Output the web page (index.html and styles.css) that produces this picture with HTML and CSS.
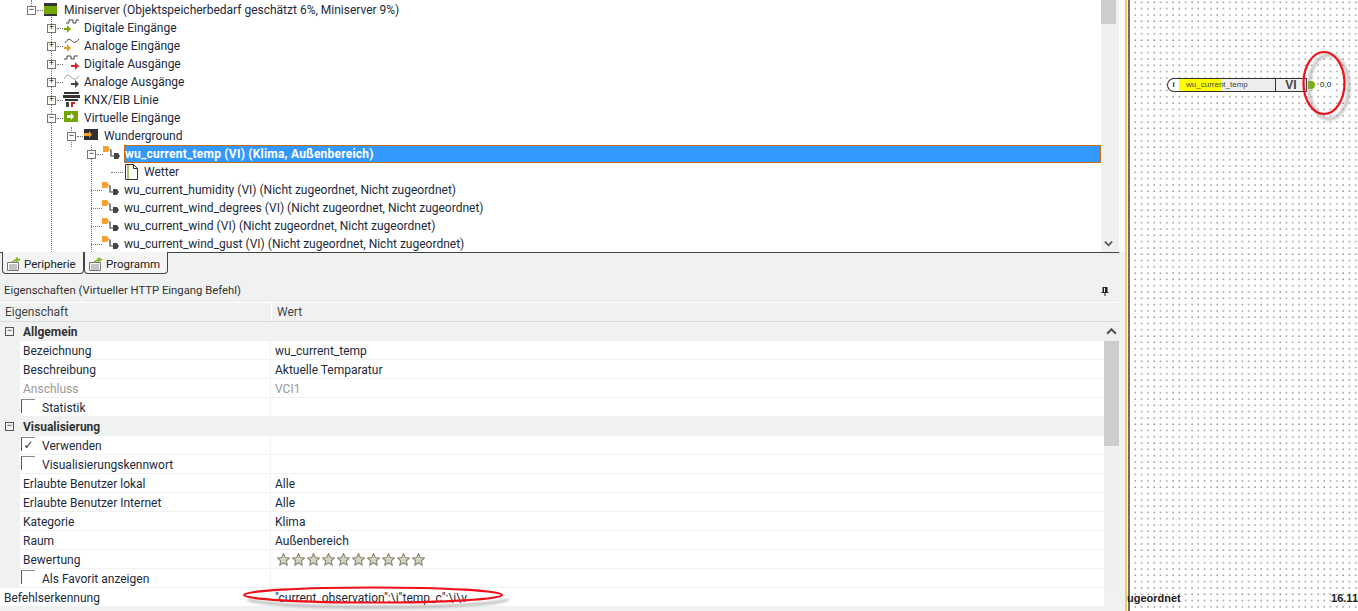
FILE: index.html
```html
<!DOCTYPE html>
<html lang="de">
<head>
<meta charset="utf-8">
<title>Loxone Config</title>
<link rel="stylesheet" href="styles.css">
</head>
<body>
<svg class="defs" width="0" height="0">
  <defs>
    <symbol id="vi" viewBox="0 0 18 18"><path d="M0 1h5l2 3-2 3H0z" fill="#f5a030"/><path d="M7 5h1v6h3" fill="none" stroke="#444" stroke-width="1.2"/><path d="M11 8h4l2 3-2 3h-4z" fill="#444"/></symbol>
    <symbol id="stars" viewBox="0 0 11 11"><path d="M5.5.5l1.5 3.3 3.5.4-2.6 2.4.7 3.6-3.1-1.8-3.1 1.8.7-3.6L.5 4.2 4 3.8z" fill="#d8d4c4" stroke="#8d8a78"/></symbol>
    <symbol id="tabicon" viewBox="0 0 16 16"><path d="M1.500 6.500h11v8h-11z" fill="#fff" stroke="#777"/><path d="M3 9h8M3 11h8M3 13h8" stroke="#888"/><path d="M5 6l5-3.500V1l5 2.500-5 3V5L7 6.500z" fill="#8cb83c"/></symbol>
  </defs>
</svg>
<div class="app">
  <div class="left">
    <section class="tree">
      <div class="treelist">
        <i class="guide g1"></i><i class="guide g2"></i><i class="guide g3"></i><i class="guide g4"></i>
        <div class="node l1"><span class="box">−</span><span class="dots"></span><svg class="ic" viewBox="0 0 18 18"><path d="M1 2h13v3H1z" fill="#333"/><path d="M1 5h13v8H1z" fill="#72a600"/><path d="M1 13h13v2H1z" fill="#333"/></svg><span class="lbl">Miniserver (Objektspeicherbedarf geschätzt 6%, Miniserver 9%)</span></div>
        <div class="node l2"><span class="box">+</span><span class="dots"></span><svg class="ic" viewBox="0 0 18 18"><path d="M3 4h3V1h4v3h3V1h3" fill="none" stroke="#444"/><path d="M1 9h3V6l4 4-4 4v-3H1z" fill="#7ab000"/></svg><span class="lbl">Digitale Eingänge</span></div>
        <div class="node l2"><span class="box">+</span><span class="dots"></span><svg class="ic" viewBox="0 0 18 18"><path d="M2 6c3-5 5-4 7-2s4 2 7-2" fill="none" stroke="#444"/><path d="M1 10h3V7l4 4-4 4v-3H1z" fill="#e0a020"/></svg><span class="lbl">Analoge Eingänge</span></div>
        <div class="node l2"><span class="box">+</span><span class="dots"></span><svg class="ic" viewBox="0 0 18 18"><path d="M1 4h3V1h4v3h3V1h4" fill="none" stroke="#444"/><path d="M8 10h4V7l4 4-4 4v-3H8z" fill="#e02020"/></svg><span class="lbl">Digitale Ausgänge</span></div>
        <div class="node l2"><span class="box">+</span><span class="dots"></span><svg class="ic" viewBox="0 0 18 18"><path d="M1 6c3-5 5-4 7-2s4 4 8-1" fill="none" stroke="#999"/><path d="M8 10h4V7l4 4-4 4v-3H8z" fill="#444"/></svg><span class="lbl">Analoge Ausgänge</span></div>
        <div class="node l2"><span class="box">+</span><span class="dots"></span><svg class="ic" viewBox="0 0 18 18"><path d="M1 1h15v2H1zM0 4h17v3H0zM2 8h13v2H2z" fill="#333"/><path d="M3 11h3v5H3z" fill="#444"/><path d="M8 11h4v2h-2v3H8z" fill="#d82020"/></svg><span class="lbl">KNX/EIB Linie</span></div>
        <div class="node l2"><span class="box">−</span><span class="dots"></span><svg class="ic" viewBox="0 0 18 18"><path d="M1 2h14v11H1z" fill="#72a600"/><path d="M4 6h4V4l3 3.500-3 3.500V9H4z" fill="#fff"/></svg><span class="lbl">Virtuelle Eingänge</span></div>
        <div class="node l3"><span class="box">−</span><span class="dots"></span><svg class="ic" viewBox="0 0 18 18"><path d="M1 2h14v11H1z" fill="#2f2f2f"/><path d="M1 6h5V4l3 3.500-3 3.500V9H1z" fill="#f5a030"/></svg><span class="lbl">Wunderground</span></div>
        <div class="node l4"><span class="box">−</span><span class="dots"></span><svg class="ic"><use href="#vi"/></svg><span class="lbl sel">wu_current_temp (VI) (Klima, Außenbereich)</span></div>
        <div class="node l5"><span class="dots long"></span><svg class="ic" viewBox="0 0 18 18"><path d="M2.500 1.500h8l4 4v11h-12z" fill="#fff" stroke="#333"/><path d="M5 2v14" stroke="#72a600" stroke-width="1.200"/><path d="M10.500 1.500v4h4" fill="none" stroke="#333"/></svg><span class="lbl">Wetter</span></div>
        <div class="node l4"><span class="dots long"></span><svg class="ic"><use href="#vi"/></svg><span class="lbl">wu_current_humidity (VI) (Nicht zugeordnet, Nicht zugeordnet)</span></div>
        <div class="node l4"><span class="dots long"></span><svg class="ic"><use href="#vi"/></svg><span class="lbl">wu_current_wind_degrees (VI) (Nicht zugeordnet, Nicht zugeordnet)</span></div>
        <div class="node l4"><span class="dots long"></span><svg class="ic"><use href="#vi"/></svg><span class="lbl">wu_current_wind (VI) (Nicht zugeordnet, Nicht zugeordnet)</span></div>
        <div class="node l4"><span class="dots long"></span><svg class="ic"><use href="#vi"/></svg><span class="lbl">wu_current_wind_gust (VI) (Nicht zugeordnet, Nicht zugeordnet)</span></div>
      </div>
      <div class="vbar treebar">
        <div class="thumb"></div>
        <div class="spacer"></div>
        <svg class="arrow" viewBox="0 0 10 10"><path d="M1 3l4 4 4-4" fill="none" stroke="#555" stroke-width="2"/></svg>
      </div>
    </section>
    <nav class="tabs">
      <div class="tab"><svg class="tabic"><use href="#tabicon"/></svg>Peripherie</div>
      <div class="tab"><svg class="tabic"><use href="#tabicon"/></svg>Programm</div>
    </nav>
    <header class="title"><span>Eigenschaften (Virtueller HTTP Eingang Befehl)</span><svg class="pin" viewBox="0 0 10 10"><path d="M2.500 1h5v5h1v1H5.500v3h-1V7h-3V6h1z M4 2v4h1V2z" fill="#222" fill-rule="evenodd"/></svg></header>
    <div class="colhead"><div class="c1">Eigenschaft</div><div class="c2">Wert</div></div>
    <section class="props">
      <div class="rows">
        <div class="sec"><span class="minus">−</span>Allgemein</div>
        <div class="row"><div class="k">Bezeichnung</div><div class="v">wu_current_temp</div></div>
        <div class="row"><div class="k">Beschreibung</div><div class="v">Aktuelle Temparatur</div></div>
        <div class="row dim"><div class="k">Anschluss</div><div class="v">VCI1</div></div>
        <div class="row"><div class="k"><span class="chk"></span>Statistik</div><div class="v"></div></div>
        <div class="sec"><span class="minus">−</span>Visualisierung</div>
        <div class="row"><div class="k"><span class="chk on">✓</span>Verwenden</div><div class="v"></div></div>
        <div class="row"><div class="k"><span class="chk"></span>Visualisierungskennwort</div><div class="v"></div></div>
        <div class="row"><div class="k">Erlaubte Benutzer lokal</div><div class="v">Alle</div></div>
        <div class="row"><div class="k">Erlaubte Benutzer Internet</div><div class="v">Alle</div></div>
        <div class="row"><div class="k">Kategorie</div><div class="v">Klima</div></div>
        <div class="row"><div class="k">Raum</div><div class="v">Außenbereich</div></div>
        <div class="row"><div class="k">Bewertung</div><div class="v stars"><svg><use href="#stars"/></svg><svg><use href="#stars"/></svg><svg><use href="#stars"/></svg><svg><use href="#stars"/></svg><svg><use href="#stars"/></svg><svg><use href="#stars"/></svg><svg><use href="#stars"/></svg><svg><use href="#stars"/></svg><svg><use href="#stars"/></svg><svg><use href="#stars"/></svg></div></div>
        <div class="row"><div class="k"><span class="chk"></span>Als Favorit anzeigen</div><div class="v"></div></div>
        <div class="row last"><div class="k">Befehlserkennung</div><div class="v">"current_observation":\i"temp_c":\i\v</div></div>
      </div>
      <div class="vbar propbar">
        <svg class="arrow" viewBox="0 0 10 10"><path d="M1 7l4-4 4 4" fill="none" stroke="#555" stroke-width="2"/></svg>
        <div class="thumb2"></div>
      </div>
      <svg class="ring ring-bottom" viewBox="0 0 280 30"><path class="shade" d="M8 15A130 8 0 0 0 268 15"/><ellipse class="red" cx="133" cy="11" rx="129" ry="7.500"/></svg>
    </section>
  </div>
  <div class="sash"></div>
  <main class="canvas">
    <div class="block">
      <span class="info">i</span>
      <div class="bname"><span class="hl"></span><span class="bt">wu_current_temp</span></div>
      <div class="vi">VI</div>
      <span class="tip"></span>
      <span class="val">0,0</span>
    </div>
    <svg class="ring ring-top" viewBox="0 0 60 80"><ellipse class="shade" cx="29" cy="40" rx="20" ry="32"/><ellipse class="red" cx="24" cy="36" rx="20.500" ry="31"/></svg>
    <div class="status"><span>ugeordnet</span><span>16.11</span></div>
  </main>
</div>
</body>
</html>
```
FILE: styles.css
```css
* { box-sizing: border-box; }
html, body { margin: 0; height: 100%; overflow: hidden; background: #fff; }
body { font: 12px/18px Roboto, sans-serif; color: #1c2a3c; }
.defs { position: absolute; }
.app { display: flex; height: 611px; }
.left { width: 1125px; flex: none; display: flex; flex-direction: column; background: #f0f2f1; }

.tree { height: 252px; display: flex; background: #fff; padding-right: 6px; }
.treelist { flex: 1; position: relative; overflow: hidden; padding-top: 1px; }
.vbar { width: 18px; flex: none; display: flex; flex-direction: column; background: #f0f0f0; }
.thumb { height: 24px; background: #cdcdcd; margin: 0 3px 0 0; }
.spacer { flex: 1; }
.arrow { width: 15px; height: 17px; padding: 4px 2px; flex: none; }
.guide { position: absolute; width: 1px; border-left: 1px dotted #777; top: 0; }
.g1 { left: 31px; height: 8px; }
.g2 { left: 51px; top: 13px; height: 239px; }
.g3 { left: 71px; top: 127px; height: 20px; }
.g4 { left: 91px; top: 145px; height: 107px; }
.node { height: 18px; display: flex; align-items: center; white-space: nowrap; position: relative; }
.l1 { padding-left: 27px; }
.l2 { padding-left: 47px; }
.l3 { padding-left: 67px; }
.l4 { padding-left: 87px; }
.l5 { padding-left: 111px; }
.box { width: 9px; height: 9px; border: 1px solid #777; background: #fff; font: 9px/7px "Liberation Mono", monospace; text-align: center; color: #000; flex: none; }
.dots { width: 6px; border-top: 1px dotted #777; margin-left: 1px; flex: none; }
.dots.long { width: 11px; margin-left: 4px; }
.l5 .dots.long { margin-left: 0; width: 12px; }
.ic { width: 18px; height: 18px; flex: none; margin-right: 3px; }
.l4 .ic { margin-right: 4px; }
.lbl { height: 18px; line-height: 18px; }
.sel { background: #3399ff; color: #fff; font-weight: 700; letter-spacing: .22px; flex: 1; border: 1px solid #c8700f; border-left-width: 0; line-height: 17px; box-shadow: -1px 0 0 #c8700f; }

.tabs { height: 23px; display: flex; padding-left: 2px; border-top: 1px solid #444; margin-right: 6px; }
.tab { height: 22px; width: 82px; display: flex; align-items: center; gap: 2px; padding-left: 3px; background: #f4f5f4; border: 1px solid #444; border-top: 0; border-radius: 0 0 4px 4px; color: #222; font-size: 11.5px; margin-top: -1px; padding-top: 2px; }
.tab + .tab { width: 84px; }
.tabic { width: 16px; height: 16px; flex: none; }

.title { height: 27px; display: flex; align-items: center; justify-content: space-between; padding: 4px 15px 0 4px; font-size: 11.3px; color: #333; }
.pin { width: 10px; height: 10px; }
.colhead { height: 20px; display: flex; border-top: 1px solid #fff; border-bottom: 1px solid #d8dad9; margin-right: 6px; color: #444; line-height: 19px; }
.c1 { width: 272px; padding-left: 5px; border-right: 1px solid #fff; }
.c2 { padding-left: 5px; }

.props { height: 289px; display: flex; position: relative; }
.rows { flex: 1; overflow: hidden; }
.propbar { margin-right: 6px; width: 15px; height: 270px; }
.propbar .arrow { height: 19px; width: 15px; }
.thumb2 { height: 105px; background: #cdcdcd; }
.sec { height: 19px; line-height: 18px; padding-top: 1px; font-weight: 700; padding-left: 23px; position: relative; color: #333; background: #f0f2f1; }
.minus { position: absolute; left: 5px; top: 5px; width: 9px; height: 9px; border: 1px solid #555; font: 9px/7px "Liberation Mono", monospace; text-align: center; }
.row { height: 19px; display: flex; line-height: 18px; padding-left: 20px; }
.k { width: 251px; background: #fff; border-bottom: 1px solid #f0f2f1; border-right: 1px solid #f0f2f1; padding: 1px 0 0 3px; display: flex; }
.v { flex: 1; background: #fff; border-bottom: 1px solid #f0f2f1; padding: 1px 0 0 4px; }
.dim .k, .dim .v { color: #9a9a9a; }
.chk { width: 14px; height: 14px; margin: 0 7px 0 -2px; border-left: 1px solid #555; border-top: 1px solid #888; background: #fff; font: 12px/14px "DejaVu Sans", sans-serif; color: #333; text-align: center; flex: none; }
.stars { display: flex; align-items: center; padding-left: 6px; padding-top: 0; }
.stars svg { width: 15px; height: 13px; flex: none; padding-right: 2px; }
.last { padding-left: 0; width: 100%; background: #fff; }
.last .k { width: 271px; padding-left: 4px; }
.ring-bottom { position: absolute; left: 240px; top: 262px; width: 280px; height: 30px; }

.sash { width: 5px; flex: none; background: linear-gradient(to right, #f5c95c 0 2px, #fff 2px 3px, #6d6d6d 3px); }
.canvas { flex: 1; position: relative; background-color: #fff; background-image: radial-gradient(circle at 1px 1px, #8c8c8c 0.5px, transparent 0.9px); background-size: 6.3px 6.3px; background-position: 4.3px 1.3px; }
.block { position: absolute; left: 37px; top: 78px; height: 14px; width: 172px; display: flex; align-items: center; font: 8px/12px "Liberation Sans", sans-serif; }
.info { width: 12px; height: 14px; border: 1px solid #333; border-right: 0; border-radius: 7px 0 0 7px; background: #fff; font-size: 8px; font-weight: 700; text-align: center; line-height: 12px; }
.bname { width: 96px; height: 14px; position: relative; background: #eee; border: 1px solid #333; border-width: 1px 0; }
.hl { position: absolute; left: 0; top: 0; bottom: 0; width: 42px; background: #ff0; }
.bt { position: relative; margin-left: 7px; color: #444; white-space: nowrap; }
.vi { width: 32px; height: 14px; background: #eee; border: 1px solid #333; text-align: center; font: 700 12px/12px "Liberation Sans", sans-serif; color: #444; }
.tip { width: 7px; height: 8px; background: #7ab000; border-radius: 0 4px 4px 0; margin-left: 1px; }
.val { margin-left: 5px; font-size: 8px; color: #012; background: #fff; }
.ring-top { position: absolute; left: 170px; top: 47px; width: 60px; height: 80px; }
.red { fill: none; stroke: #f0101a; stroke-width: 2.2; }
.shade { fill: none; stroke: #9a9a9a; stroke-width: 3.5; opacity: .55; filter: blur(1.2px); }
.status { position: absolute; left: -3px; right: 0; bottom: 6px; height: 13px; display: flex; justify-content: space-between; font: 700 11px/13px "Liberation Sans", sans-serif; color: #222; }
```
